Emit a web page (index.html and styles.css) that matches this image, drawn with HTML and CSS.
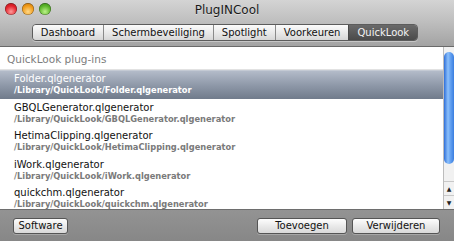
FILE: index.html
```html
<!DOCTYPE html>
<html>
<head>
<meta charset="utf-8">
<link rel="stylesheet" href="styles.css">
</head>
<body>
<div class="window">
  <div class="titlebar">
    <div class="lights">
      <span class="light red"></span>
      <span class="light yellow"></span>
      <span class="light green"></span>
    </div>
    <div class="title">PlugINCool</div>
  </div>
  <div class="toolbar">
    <div class="tabs">
      <div class="tab">Dashboard</div>
      <div class="tab">Schermbeveiliging</div>
      <div class="tab">Spotlight</div>
      <div class="tab">Voorkeuren</div>
      <div class="tab selected">QuickLook</div>
    </div>
  </div>
  <div class="content">
    <div class="list">
      <div class="header">QuickLook plug-ins</div>
      <div class="row selected">
        <div class="name">Folder.qlgenerator</div>
        <div class="path">/Library/QuickLook/Folder.qlgenerator</div>
      </div>
      <div class="row">
        <div class="name">GBQLGenerator.qlgenerator</div>
        <div class="path">/Library/QuickLook/GBQLGenerator.qlgenerator</div>
      </div>
      <div class="row">
        <div class="name">HetimaClipping.qlgenerator</div>
        <div class="path">/Library/QuickLook/HetimaClipping.qlgenerator</div>
      </div>
      <div class="row">
        <div class="name">iWork.qlgenerator</div>
        <div class="path">/Library/QuickLook/iWork.qlgenerator</div>
      </div>
      <div class="row">
        <div class="name">quickchm.qlgenerator</div>
        <div class="path">/Library/QuickLook/quickchm.qlgenerator</div>
      </div>
    </div>
    <div class="scrollbar">
      <div class="track"><div class="thumb"></div></div>
      <div class="arrow up">&#9650;</div>
      <div class="arrow down">&#9660;</div>
    </div>
  </div>
  <div class="bottombar">
    <div class="btn w-software">Software</div>
    <div class="spacer"></div>
    <div class="btn w-add">Toevoegen</div>
    <div class="btn w-del">Verwijderen</div>
  </div>
</div>
</body>
</html>
```
FILE: styles.css
```css
html, body {
  margin: 0;
  padding: 0;
  width: 454px;
  height: 241px;
  overflow: hidden;
  font-family: "DejaVu Sans", "Noto Sans", sans-serif;
}
.window {
  width: 454px;
  height: 241px;
  display: flex;
  flex-direction: column;
  background: #8e8e8e;
}
.titlebar {
  height: 20px;
  display: flex;
  align-items: center;
  position: relative;
  background: linear-gradient(#d4d4d4, #c0c0c0);
}
.lights {
  display: flex;
  gap: 5px;
  padding-left: 5px;
  margin-top: -2px;
}
.light {
  width: 12px;
  height: 12px;
  border-radius: 50%;
  box-shadow: inset 0 0 0 0.5px rgba(0,0,0,0.45);
}
.light.red { background: radial-gradient(circle at 50% 72%, #ff9a9a 0, #e2232b 55%, #a3161a 100%); }
.light.yellow { background: radial-gradient(circle at 50% 72%, #ffd98a 0, #f09a18 55%, #b36a0b 100%); }
.light.green { background: radial-gradient(circle at 50% 72%, #bdf28a 0, #5cb52a 55%, #317c14 100%); }
.title {
  position: absolute;
  left: 0;
  right: 0;
  top: 3px;
  text-align: center;
  font-size: 12px;
  color: #1a1a1a;
  text-shadow: 0 1px 0 rgba(255,255,255,0.4);
}
.toolbar {
  height: 27px;
  display: flex;
  justify-content: center;
  align-items: flex-start;
  background: linear-gradient(#c0c0c0, #a3a3a3);
  border-bottom: 1px solid #6a6a6a;
  box-sizing: border-box;
}
.tabs {
  display: flex;
  margin-top: 4px;
  margin-left: -4px;
  border: 1px solid #5c5c5c;
  border-radius: 4px;
  overflow: hidden;
  height: 15px;
  box-shadow: 0 1px 0 rgba(255,255,255,0.35);
}
.tab {
  font-size: 10px;
  line-height: 15px;
  padding: 0 8px;
  color: #111;
  background: linear-gradient(#fbfbfb, #e8e8e8 55%, #d6d6d6);
  border-left: 1px solid #8a8a8a;
}
.tab:first-child { border-left: none; }
.tab.selected {
  background: linear-gradient(#6a6a6a, #4a4a4a);
  color: #f2f2f2;
  border-left-color: #4a4a4a;
}
.content {
  flex: 1;
  display: flex;
  background: #fff;
  min-height: 0;
}
.list {
  flex: 1;
  overflow: hidden;
}
.header {
  height: 22px;
  line-height: 24px;
  padding-left: 7px;
  font-size: 10.5px;
  color: #7d7d7d;
  border-bottom: 1px solid #e2e2e2;
}
.row {
  height: 28.5px;
  box-sizing: border-box;
  padding-left: 14px;
  padding-top: 2px;
}
.row.selected {
  background: linear-gradient(#b3bbc9, #8f99a9 50%, #707b8b);
  border-top: 1px solid #c4cad4;
  padding-top: 1px;
}
.name {
  font-size: 10px;
  line-height: 13px;
  color: #111;
}
.path {
  font-size: 8.3px;
  font-weight: bold;
  line-height: 11px;
  color: #7a7a7a;
}
.row.selected .name,
.row.selected .path { color: #fff; }
.scrollbar {
  width: 10px;
  display: flex;
  flex-direction: column;
  background: #f1f1f1;
  border-left: 1px solid #bcbcbc;
}
.track {
  flex: 1;
  padding-top: 5px;
}
.thumb {
  height: 112px;
  border-radius: 5px;
  background: linear-gradient(90deg, #2f6fd8, #8cc0fb 40%, #6aa6f3 60%, #3a7ee0);
}
.arrow {
  height: 13px;
  font-size: 6px;
  line-height: 13px;
  text-align: center;
  color: #222;
  border-top: 1px solid #c8c8c8;
}
.bottombar {
  height: 31px;
  display: flex;
  align-items: center;
  gap: 5px;
  padding: 0 14px 0 13px;
  background: linear-gradient(#939393, #878787);
  border-top: 1px solid #6e6e6e;
}
.spacer { flex: 1; }
.btn {
  height: 14px;
  line-height: 14px;
  font-size: 10px;
  text-align: center;
  color: #111;
  border: 1px solid #555;
  border-radius: 3px;
  background: linear-gradient(#fdfdfd, #e8e8e8 55%, #d9d9d9);
  box-shadow: 0 1px 0 rgba(255,255,255,0.25);
}
.w-software { width: 53px; }
.w-add { width: 88px; }
.w-del { width: 86px; }
```
